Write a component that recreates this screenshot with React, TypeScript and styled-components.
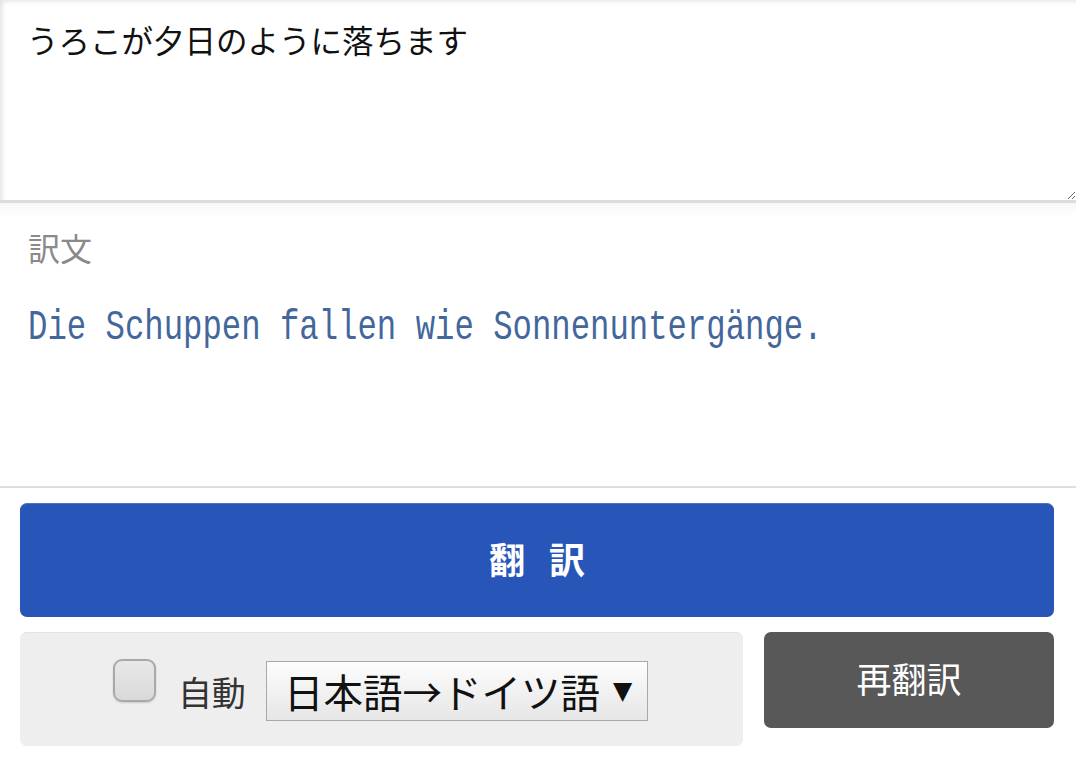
import styled, { createGlobalStyle } from "styled-components";

const GlobalStyle = createGlobalStyle`
  html, body {
    margin: 0;
    padding: 0;
    background: #fff;
  }
  body {
    font-family: "Noto Sans CJK JP", "Liberation Sans", sans-serif;
  }
`;

const Page = styled.div`
  display: flex;
  flex-direction: column;
  width: 1076px;
`;

const SourceInput = styled.textarea`
  display: block;
  box-sizing: border-box;
  width: 100%;
  height: 203px;
  margin: 0;
  padding: 17px 27px;
  border: none;
  border-bottom: 3px solid #dcdcdc;
  box-shadow: inset 4px 3px 5px -2px rgba(0, 0, 0, 0.12);
  font-family: "Noto Sans CJK JP", sans-serif;
  font-size: 31.5px;
  line-height: 44px;
  color: #111;
  background: #fff;
  resize: vertical;
  outline: none;
`;

const ResultSection = styled.section`
  box-sizing: border-box;
  height: 285px;
  padding: 24px 28px 0;
  border-bottom: 2px solid #dedede;
  background: linear-gradient(#f7f7f7, #fff 14px);
`;

const ResultLabel = styled.div`
  font-size: 32px;
  line-height: 40px;
  color: #8a8a8a;
`;

const ResultText = styled.div`
  margin-top: 42px;
  font-family: "Liberation Mono", "DejaVu Sans Mono", monospace;
  font-size: 32.3px;
  line-height: 40px;
  color: #44679b;
  display: inline-block;
  transform: scaleY(1.3);
  transform-origin: left center;
  white-space: nowrap;
`;

const Controls = styled.div`
  display: flex;
  flex-direction: column;
  gap: 15px;
  padding: 15px 22px 0 20px;
`;

const TranslateButton = styled.button`
  height: 114px;
  border: none;
  border-top: 1px solid #4a73c6;
  border-radius: 7px;
  background: #2855b8;
  color: #fff;
  font-family: "Noto Sans CJK JP", sans-serif;
  font-weight: 700;
  font-size: 36px;
  letter-spacing: 24px;
  padding: 0 0 6px 24px;
  cursor: pointer;
`;

const BottomRow = styled.div`
  display: grid;
  grid-template-columns: 723px 1fr;
  gap: 21px;
  align-items: start;
`;

const OptionsPanel = styled.div`
  height: 114px;
  box-sizing: border-box;
  display: flex;
  align-items: center;
  justify-content: center;
  gap: 20px;
  padding-right: 2px;
  background: #eeeeee;
  border-top: 1px solid #e2e2e2;
  border-radius: 7px;
`;

const AutoLabel = styled.label`
  display: flex;
  align-items: center;
  gap: 22px;
  font-size: 34px;
  color: #333;
  margin-top: 4px;
`;

const CheckBox = styled.span`
  width: 43px;
  height: 43px;
  box-sizing: border-box;
  margin-top: -22px;
  border: 2px solid #a9a9a9;
  border-radius: 9px;
  background: linear-gradient(#e8e8e8, #d9d9d9);
  box-shadow: 0 1px 2px rgba(0, 0, 0, 0.15);
`;

const LangSelect = styled.div`
  display: flex;
  align-items: center;
  gap: 13px;
  box-sizing: border-box;
  height: 60px;
  padding: 0 15px 0 17px;
  margin-top: 2px;
  border: 1px solid #a8a8a8;
  background: linear-gradient(#fdfdfd, #e6e6e6);
  font-size: 39.5px;
  color: #111;
`;

const Caret = styled.span`
  font-family: "DejaVu Sans", sans-serif;
  font-size: 25px;
`;

const RetranslateButton = styled.button`
  height: 96px;
  border: none;
  border-radius: 7px;
  background: #585858;
  color: #fff;
  font-family: "Noto Sans CJK JP", sans-serif;
  font-size: 35px;
  padding-bottom: 6px;
  cursor: pointer;
`;

export default function App() {
  return (
    <Page>
      <GlobalStyle />
      <SourceInput defaultValue="うろこが夕日のように落ちます" />
      <ResultSection>
        <ResultLabel>訳文</ResultLabel>
        <ResultText>Die Schuppen fallen wie Sonnenuntergänge.</ResultText>
      </ResultSection>
      <Controls>
        <TranslateButton>翻訳</TranslateButton>
        <BottomRow>
          <OptionsPanel>
            <AutoLabel>
              <CheckBox />
              自動
            </AutoLabel>
            <LangSelect>
              日本語→ドイツ語
              <Caret>▼</Caret>
            </LangSelect>
          </OptionsPanel>
          <RetranslateButton>再翻訳</RetranslateButton>
        </BottomRow>
      </Controls>
    </Page>
  );
}
